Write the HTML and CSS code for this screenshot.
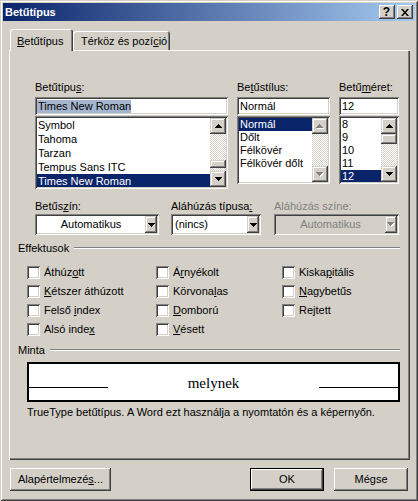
FILE: index.html
```html
<!DOCTYPE html>
<html lang="hu">
<head>
<meta charset="utf-8">
<title>Betűtípus</title>
<link rel="stylesheet" href="styles.css">
</head>
<body>
<div class="window">
  <div class="titlebar">
    <span class="title">Betűtípus</span>
    <div class="caption-btns">
      <span class="cbtn help">?</span>
      <span class="cbtn close"><svg width="8" height="7" viewBox="0 0 8 7"><path d="M0 0h2l2 2.4L6 0h2L5 3.5 8 7H6L4 4.6 2 7H0l3-3.5z"/></svg></span>
    </div>
  </div>

  <div class="tabs">
    <div class="tab active"><u>B</u>etűtípus</div>
    <div class="tab inactive">Térköz és pozí<u>c</u>ió</div>
  </div>

  <div class="panel">
    <div class="font-row">
      <div class="col col-font">
        <div class="label">Betűtípu<u>s</u>:</div>
        <div class="field"><span class="seltext">Times New Roman</span></div>
        <div class="list list-font">
          <div class="items">
            <div class="item">Symbol</div>
            <div class="item">Tahoma</div>
            <div class="item">Tarzan</div>
            <div class="item">Tempus Sans ITC</div>
            <div class="item selected">Times New Roman</div>
          </div>
          <div class="vscroll">
            <div class="sbtn"><svg width="7" height="4" viewBox="0 0 7 4"><path d="M3 0h1v1h1v1h1v1h1v1H0V3h1V2h1V1h1z"/></svg></div>
            <div class="track"><div class="thumb thumb-font"></div></div>
            <div class="sbtn"><svg width="7" height="4" viewBox="0 0 7 4"><path d="M0 0h7v1H6v1H5v1H4v1H3V3H2V2H1V1H0z"/></svg></div>
          </div>
        </div>
      </div>

      <div class="col col-style">
        <div class="label">Be<u>t</u>űstílus:</div>
        <div class="field">Normál</div>
        <div class="list">
          <div class="items">
            <div class="item selected">Normál</div>
            <div class="item">Dőlt</div>
            <div class="item">Félkövér</div>
            <div class="item">Félkövér dőlt</div>
          </div>
          <div class="vscroll">
            <div class="sbtn"><svg width="8" height="5" viewBox="0 0 8 5"><path class="hl" d="M4 1h1v1h1v1h1v1h1v1H1V4h1V3h1V2h1z"/><path class="dis" d="M3 0h1v1h1v1h1v1h1v1H0V3h1V2h1V1h1z"/></svg></div>
            <div class="track"></div>
            <div class="sbtn"><svg width="8" height="5" viewBox="0 0 8 5"><path class="hl" d="M1 1h7v1H7v1H6v1H5v1H4V4H3V3H2V2H1z"/><path class="dis" d="M0 0h7v1H6v1H5v1H4v1H3V3H2V2H1V1H0z"/></svg></div>
          </div>
        </div>
      </div>

      <div class="col col-size">
        <div class="label">Betű<u>m</u>éret:</div>
        <div class="field">12</div>
        <div class="list">
          <div class="items">
            <div class="item">8</div>
            <div class="item">9</div>
            <div class="item">10</div>
            <div class="item">11</div>
            <div class="item selected">12</div>
          </div>
          <div class="vscroll">
            <div class="sbtn"><svg width="7" height="4" viewBox="0 0 7 4"><path d="M3 0h1v1h1v1h1v1h1v1H0V3h1V2h1V1h1z"/></svg></div>
            <div class="track"><div class="thumb thumb-size"></div></div>
            <div class="sbtn"><svg width="7" height="4" viewBox="0 0 7 4"><path d="M0 0h7v1H6v1H5v1H4v1H3V3H2V2H1V1H0z"/></svg></div>
          </div>
        </div>
      </div>
    </div>

    <div class="combo-row">
      <div class="ccol ccol-color">
        <div class="label">Betűs<u>z</u>ín:</div>
        <div class="combo">
          <span class="ctext center">Automatikus</span>
          <span class="dropbtn"><svg width="7" height="4" viewBox="0 0 7 4"><path d="M0 0h7v1H6v1H5v1H4v1H3V3H2V2H1V1H0z"/></svg></span>
        </div>
      </div>
      <div class="ccol ccol-utype">
        <div class="label">Aláhúzás típusa<u>:</u></div>
        <div class="combo">
          <span class="ctext">(nincs)</span>
          <span class="dropbtn"><svg width="7" height="4" viewBox="0 0 7 4"><path d="M0 0h7v1H6v1H5v1H4v1H3V3H2V2H1V1H0z"/></svg></span>
        </div>
      </div>
      <div class="ccol ccol-ucolor">
        <div class="label disabled">Aláhúzás színe:</div>
        <div class="combo combo-disabled">
          <span class="ctext center">Automatikus</span>
          <span class="dropbtn"><svg width="8" height="5" viewBox="0 0 8 5"><path class="hl" d="M1 1h7v1H7v1H6v1H5v1H4V4H3V3H2V2H1z"/><path class="dis" d="M0 0h7v1H6v1H5v1H4v1H3V3H2V2H1V1H0z"/></svg></span>
        </div>
      </div>
    </div>

    <div class="group-head head-effects"><span>Effektusok</span><div class="etch"></div></div>
    <div class="effects">
      <div class="chk"><span class="box"></span><span>Áthúz<u>o</u>tt</span></div>
      <div class="chk"><span class="box"></span><span><u>K</u>étszer áthúzott</span></div>
      <div class="chk"><span class="box"></span><span>Felső <u>i</u>ndex</span></div>
      <div class="chk"><span class="box"></span><span>Alsó inde<u>x</u></span></div>
      <div class="chk"><span class="box"></span><span>Á<u>r</u>nyékolt</span></div>
      <div class="chk"><span class="box"></span><span>Körvona<u>l</u>as</span></div>
      <div class="chk"><span class="box"></span><span><u>D</u>omború</span></div>
      <div class="chk"><span class="box"></span><span><u>V</u>ésett</span></div>
      <div class="chk"><span class="box"></span><span>Kiska<u>p</u>itális</span></div>
      <div class="chk"><span class="box"></span><span><u>N</u>agybetűs</span></div>
      <div class="chk"><span class="box"></span><span>Re<u>j</u>tett</span></div>
    </div>

    <div class="group-head head-sample"><span>Minta</span><div class="etch"></div></div>
    <div class="preview">
      <span class="pline"></span>
      <span class="ptext">melynek</span>
      <span class="pline"></span>
    </div>
    <div class="note">TrueType betűtípus. A Word ezt használja a nyomtatón és a képernyőn.</div>
  </div>

  <div class="buttons">
    <div class="btn btn-defaults">Alapértelmezé<u>s</u>...</div>
    <div class="btn btn-ok">OK</div>
    <div class="btn btn-cancel">Mégse</div>
  </div>
</div>
</body>
</html>
```

FILE: styles.css
```css
* { box-sizing: border-box; }

html, body {
  margin: 0;
  padding: 0;
  background: #d4d0c8;
}

body {
  font-family: "Liberation Sans", Arial, sans-serif;
  font-size: 11px;
  line-height: 13px;
  color: #000;
}

u { text-decoration: underline; text-underline-offset: 1px; }

.window {
  width: 418px;
  height: 501px;
  padding: 3px;
  background: #d4d0c8;
  box-shadow: inset 1px 1px #d4d0c8, inset -1px -1px #404040, inset 2px 2px #fff, inset -2px -2px #808080;
}

/* title bar */
.titlebar {
  height: 18px;
  display: flex;
  align-items: center;
  justify-content: space-between;
  padding: 0 2px 0 2px;
  background: linear-gradient(to right, #0a246a, #a6caf0);
}
.title {
  color: #fff;
  font-weight: bold;
  font-size: 11px;
}
.caption-btns { display: flex; gap: 2px; }
.cbtn {
  width: 16px;
  height: 14px;
  display: flex;
  align-items: center;
  justify-content: center;
  background: #d4d0c8;
  box-shadow: inset -1px -1px #404040, inset 1px 1px #fff, inset -2px -2px #808080, inset 2px 2px #d4d0c8;
}
.help {
  font-weight: bold;
  font-size: 12px;
  line-height: 14px;
  padding-right: 1px;
}
.close svg { fill: #000; margin-right: 1px; }

/* tabs */
.tabs {
  display: flex;
  align-items: flex-end;
  height: 21px;
  margin: 8px 0 0 7px;
}
.tab {
  background: #d4d0c8;
  border-radius: 3px 3px 0 0;
  box-shadow: inset 1px 1px #fff, inset -1px 0 #404040, inset -2px 0 #808080;
  white-space: nowrap;
}
.tab.active {
  width: 63px;
  height: 22px;
  margin-bottom: -1px;
  padding: 6px 0 0 7px;
  position: relative;
  z-index: 1;
}
.tab.inactive {
  width: 97px;
  height: 19px;
  padding: 4px 0 0 8px;
}

/* panel */
.panel {
  width: 401px;
  height: 410px;
  margin-left: 6px;
  padding: 31px 10px 0 9px;
  box-shadow: inset 1px 1px #fff, inset -1px -1px #404040, inset -2px -2px #808080;
}

.label { height: 13px; white-space: nowrap; }
.label.disabled { color: #808080; }

/* font row */
.font-row {
  display: flex;
  align-items: flex-start;
  gap: 9px;
  margin-left: 17px;
}
.col-font { width: 193px; }
.col-style { width: 93px; }
.col-size { width: 60px; }
.col .label { margin-bottom: 3px; }

.sunken {
}
.field {
  height: 18px;
  margin-bottom: 1px;
  padding: 2px 2px 2px 3px;
  line-height: 14px;
  background: #fff;
  white-space: nowrap;
  overflow: hidden;
  box-shadow: inset 1px 1px #808080, inset -1px -1px #fff, inset 2px 2px #404040, inset -2px -2px #d4d0c8;
}
.seltext {
  display: inline-block;
  background: #a6b5cf;
  line-height: 13px;
  margin-left: -1px;
  padding-left: 1px;
}

.list {
  height: 68px;
  display: flex;
  padding: 2px;
  background: #fff;
  box-shadow: inset 1px 1px #808080, inset -1px -1px #fff, inset 2px 2px #404040, inset -2px -2px #d4d0c8;
}
.list-font { height: 73px; }
.items {
  flex: 1;
  min-width: 0;
  overflow: hidden;
}
.item {
  height: 13px;
  line-height: 13px;
  padding-left: 1px;
  white-space: nowrap;
}
.list-font .item { height: 14px; line-height: 14px; }
.item.selected { background: #0a246a; color: #fff; }

.vscroll {
  width: 16px;
  display: flex;
  flex-direction: column;
}
.sbtn {
  height: 16px;
  flex: none;
  display: flex;
  align-items: center;
  justify-content: center;
  background: #d4d0c8;
  box-shadow: inset -1px -1px #404040, inset 1px 1px #d4d0c8, inset -2px -2px #808080, inset 2px 2px #fff;
}
.sbtn svg, .dropbtn svg { fill: #000; }
svg .hl { fill: #fff; }
svg .dis { fill: #808080; }
.track {
  flex: 1;
  display: flex;
  flex-direction: column;
  background: repeating-conic-gradient(#fff 0 25%, #d4d0c8 0 50%) 0 0 / 2px 2px;
}
.thumb {
  background: #d4d0c8;
  box-shadow: inset -1px -1px #404040, inset 1px 1px #d4d0c8, inset -2px -2px #808080, inset 2px 2px #fff;
}
.thumb-font { height: 8px; margin-top: 26px; }
.thumb-size { height: 10px; }

/* combo row */
.combo-row {
  display: flex;
  margin: 11px 0 0 17px;
}
.ccol .label { margin-bottom: 1px; }
.ccol-color { width: 124px; }
.ccol-utype { width: 90px; margin-left: 12px; }
.ccol-ucolor { width: 125px; margin-left: 13px; }

.combo {
  height: 21px;
  display: flex;
  padding: 2px;
  background: #fff;
  box-shadow: inset 1px 1px #808080, inset -1px -1px #fff, inset 2px 2px #404040, inset -2px -2px #d4d0c8;
}
.combo-disabled { background: #d4d0c8; color: #808080; }
.ctext {
  flex: 1;
  line-height: 17px;
  padding-left: 2px;
  white-space: nowrap;
}
.ctext.center { text-align: center; padding-left: 0; }
.dropbtn {
  width: 12px;
  flex: none;
  display: flex;
  align-items: center;
  justify-content: center;
  background: #d4d0c8;
  box-shadow: inset -1px -1px #404040, inset 1px 1px #d4d0c8, inset -2px -2px #808080, inset 2px 2px #fff;
}

/* groups */
.group-head {
  display: flex;
  align-items: center;
  gap: 5px;
  height: 13px;
}
.head-effects { margin-top: 7px; }
.head-sample { margin-top: 5px; }
.etch {
  flex: 1;
  height: 2px;
  border-top: 1px solid #808080;
  border-bottom: 1px solid #fff;
  margin-top: -2px;
}

.effects {
  display: grid;
  grid-template-columns: 129px 126px 1fr;
  grid-template-rows: repeat(4, 19px);
  grid-auto-flow: column;
  margin: 8px 0 0 9px;
}
.chk {
  display: flex;
  align-items: center;
  gap: 4px;
  white-space: nowrap;
}
.box {
  width: 13px;
  height: 13px;
  flex: none;
  background: #fff;
  box-shadow: inset 1px 1px #808080, inset -1px -1px #fff, inset 2px 2px #404040, inset -2px -2px #d4d0c8;
}

.preview {
  display: flex;
  align-items: baseline;
  height: 40px;
  margin: 5px 0 0 9px;
  padding-top: 11px;
  border: 2px solid #000;
  background: #fff;
}
.pline {
  width: 79px;
  height: 1px;
  background: #000;
}
.ptext {
  flex: 1;
  text-align: center;
  font-family: "Liberation Serif", "Times New Roman", serif;
  font-size: 15px;
  line-height: 17px;
}
.note {
  margin: 4px 0 0 9px;
  white-space: nowrap;
}

/* buttons */
.buttons {
  display: flex;
  margin: 8px 7px 0 7px;
}
.btn {
  height: 23px;
  line-height: 23px;
  text-align: center;
  background: #d4d0c8;
  box-shadow: inset -1px -1px #404040, inset 1px 1px #fff, inset -2px -2px #808080, inset 2px 2px #d4d0c8;
  white-space: nowrap;
}
.btn-defaults { width: 101px; }
.btn-ok {
  width: 74px;
  margin-left: auto;
  box-shadow: inset 0 0 0 1px #000, inset -2px -2px #404040, inset 2px 2px #fff, inset -3px -3px #808080, inset 3px 3px #d4d0c8;
}
.btn-cancel { width: 74px; margin-left: 10px; }
```
